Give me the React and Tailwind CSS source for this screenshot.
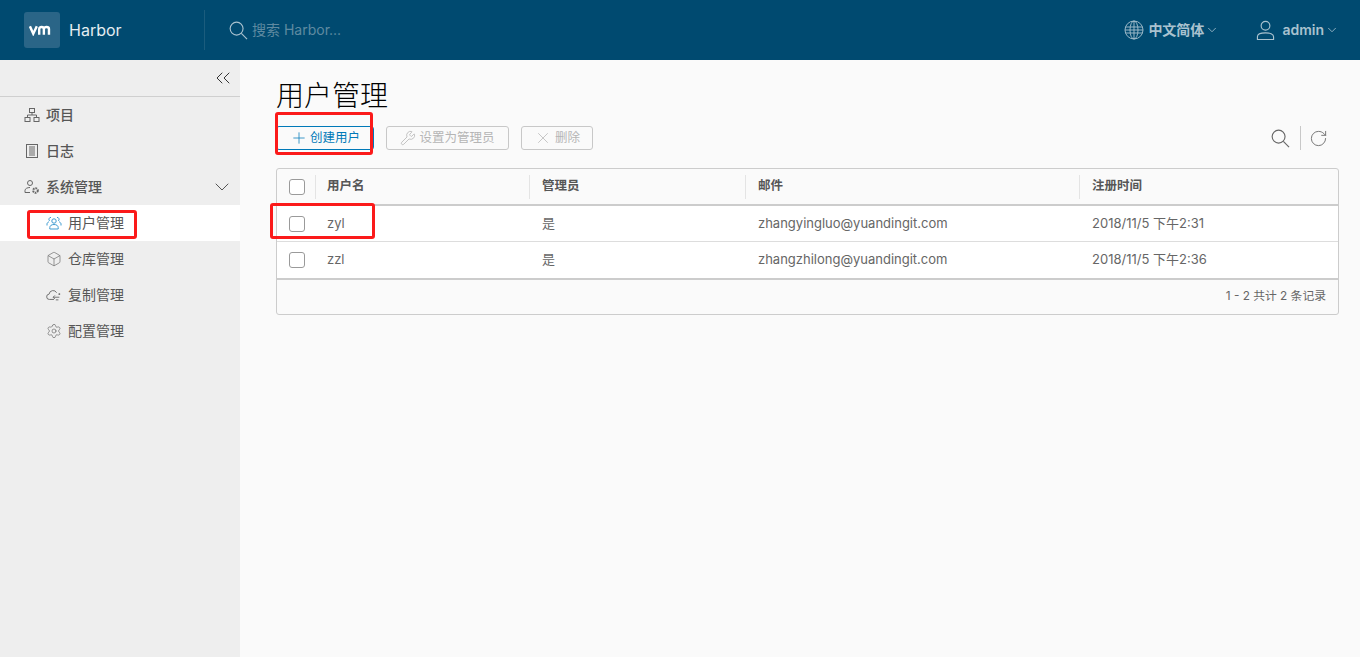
import { ChevronDown, ChevronsLeft, Plus, RotateCw, X, Wrench, Box, Settings } from 'lucide-react';

const font = { fontFamily: '"Inter", "Noto Sans CJK SC", sans-serif' };

const SearchIcon = ({ className }) => (
  <svg viewBox="0 0 20 20" fill="none" stroke="currentColor" strokeWidth="1.2" className={className}>
    <circle cx="8" cy="8" r="6.8" />
    <path d="M13 13l6 6" />
  </svg>
);

const GlobeIcon = ({ className }) => (
  <svg viewBox="0 0 20 20" fill="none" stroke="currentColor" strokeWidth="0.9" className={className}>
    <circle cx="10" cy="10" r="9" />
    <ellipse cx="10" cy="10" rx="4" ry="9" />
    <path d="M10 1v18M1.5 7h17M1.5 13h17M1 10h18" />
  </svg>
);

const UserIcon = ({ className }) => (
  <svg viewBox="0 0 20 22" fill="none" stroke="currentColor" strokeWidth="1.2" className={className}>
    <circle cx="10" cy="6" r="4.6" />
    <path d="M1.5 20.5v-3c0-2.6 4-4 8.5-4s8.5 1.4 8.5 4v3z" />
  </svg>
);

const ProjectIcon = ({ className }) => (
  <svg viewBox="0 0 16 16" fill="none" stroke="currentColor" strokeWidth="1" className={className}>
    <rect x="5.5" y="1.5" width="5" height="4" />
    <rect x="1" y="10.5" width="5" height="4" />
    <rect x="10" y="10.5" width="5" height="4" />
    <path d="M8 5.5V8M3.5 10.5V8h9v2.5" />
  </svg>
);

const LogIcon = ({ className }) => (
  <svg viewBox="0 0 16 16" fill="none" stroke="currentColor" strokeWidth="1" className={className}>
    <rect x="2.5" y="1.5" width="11" height="13" />
    <path d="M5 4h6M5 6h6M5 8h6M5 10h6M5 12h6" />
  </svg>
);

const AdminIcon = ({ className }) => (
  <svg viewBox="0 0 16 16" fill="none" stroke="currentColor" className={className}>
    <circle cx="6" cy="4" r="2.5" />
    <path d="M1 13.5v-2c0-2 2.5-3 5-3" />
    <path d="M1 13.5h5" />
    <circle cx="11.5" cy="11.5" r="2.3" strokeWidth="2" strokeDasharray="1.6 0.8" />
  </svg>
);

const UsersIcon = ({ className }) => (
  <svg viewBox="0 0 16 16" fill="none" stroke="currentColor" strokeWidth="1" className={className}>
    <circle cx="8" cy="6" r="2.2" />
    <path d="M3.8 14v-1.5c0-2 2-3 4.2-3s4.2 1 4.2 3V14z" />
    <path d="M5 2.4a2 2 0 0 0-1.4 3.5M1 10.5V9c0-1 .8-1.8 2-2.2M11 2.4a2 2 0 0 1 1.4 3.5M15 10.5V9c0-1-.8-1.8-2-2.2" />
  </svg>
);

const CloudIcon = ({ className }) => (
  <svg viewBox="0 0 18 16" fill="none" stroke="currentColor" strokeWidth="1" className={className}>
    <path d="M9 13H4a3 3 0 0 1-.5-6A4.5 4.5 0 0 1 12 5.5" />
    <path d="M15 8v-2M14 7h2M8 10.5h7M8 10.5l2-2M8 10.5l2 2M14 13.5h-3" />
  </svg>
);

const VmLogo = () => (
  <svg viewBox="0 0 28 12" className="w-[26px] h-[12px]" fill="none" stroke="white" strokeWidth="2.6">
    <path d="M1 2l3.6 8L8.4 2" />
    <path d="M11 11V5c0-3 5-3 5 0v6M16 5c0-3 5.5-3 5.5 0v6" />
  </svg>
);

const navTop = [
  { label: '项目', Icon: ProjectIcon },
  { label: '日志', Icon: LogIcon },
];

const navSub = [
  { label: '用户管理', Icon: UsersIcon, active: true },
  { label: '仓库管理', Icon: Box },
  { label: '复制管理', Icon: CloudIcon },
  { label: '配置管理', Icon: Settings },
];

const users = [
  { name: 'zyl', admin: '是', mail: 'zhangyingluo@yuandingit.com', time: '2018/11/5 下午2:31' },
  { name: 'zzl', admin: '是', mail: 'zhangzhilong@yuandingit.com', time: '2018/11/5 下午2:36' },
];

const cols = 'grid grid-cols-[38px_214px_216px_334px_1fr]';

const Check = () => <span className="block w-4 h-4 rounded-[3px] border border-[#9a9a9a] bg-white" />;

const RedBox = ({ className }) => (
  <div className={`absolute border-[3px] border-[#fb1a1a] rounded-[3px] pointer-events-none ${className}`} />
);

const App = () => {
  return (
    <div style={font} className="relative w-[1360px] h-[657px] overflow-hidden flex flex-col bg-[#fafafa] text-[#565656]">
      <header className="h-[60px] shrink-0 bg-[#004a70] flex items-center text-[#a9c2cf]">
        <div className="w-[205px] h-10 flex items-center border-r border-[#1b5c7d] pl-6">
          <div className="w-9 h-9 rounded-[3px] bg-[#2a6587] flex items-center justify-center">
            <VmLogo />
          </div>
          <span className="ml-[9px] text-base text-[#e4edf1]">Harbor</span>
        </div>
        <SearchIcon className="ml-[24px] w-[19px] h-[19px] text-[#a9c2cf]" />
        <span className="ml-[4px] text-sm text-[#5f8aa1]">搜索 Harbor...</span>
        <div className="ml-auto flex items-center">
          <GlobeIcon className="w-5 h-5" />
          <span className="ml-[4px] text-sm font-semibold">中文简体</span>
          <ChevronDown size={14} strokeWidth={1.4} className="ml-[1px]" />
          <UserIcon className="ml-[37px] w-[19px] h-[21px]" />
          <span className="ml-[7px] text-sm font-semibold">admin</span>
          <ChevronDown size={14} strokeWidth={1.4} className="ml-[1px] mr-[21px]" />
        </div>
      </header>

      <div className="flex flex-1 min-h-0">
        <aside className="w-[240px] shrink-0 bg-[#eeeeee] text-sm">
          <div className="h-[37px] border-b border-[#cfcfcf] flex justify-end items-center pr-[5px]">
            <ChevronsLeft size={24} strokeWidth={1} className="text-[#333]" />
          </div>
          {navTop.map(({ label, Icon }) => (
            <div key={label} className="h-9 flex items-center pl-6 font-medium text-[#565656]">
              <Icon className="w-4 h-4 mr-[6px] text-[#666]" />
              {label}
            </div>
          ))}
          <div className="h-9 flex items-center pl-6 pr-[6px] font-medium text-[#565656]">
            <AdminIcon className="w-4 h-4 mr-[6px] text-[#666]" />
            系统管理
            <ChevronDown size={24} strokeWidth={1} className="ml-auto text-[#555]" />
          </div>
          {navSub.map(({ label, Icon, active }) => (
            <div key={label} className={`h-9 flex items-center pl-[46px] ${active ? 'bg-white' : ''}`}>
              <Icon className={`w-4 h-4 mr-[6px] ${active ? 'text-[#3f9bd0]' : 'text-[#666]'}`} strokeWidth={1} />
              {label}
            </div>
          ))}
        </aside>

        <main className="flex-1 pl-9 pr-[21px]">
          <h1 className="mt-[18px] h-[36px] text-[28px] leading-[36px] font-light text-black">用户管理</h1>
          <div className="mt-3 h-6 flex items-center">
            <button className="h-6 w-[98px] flex items-center justify-center rounded-[3px] border border-[#0079b8] text-[#0079b8] text-[12.5px]">
              <Plus size={18} strokeWidth={1} className="mr-[2px]" />
              创建用户
            </button>
            <button className="ml-3 h-6 w-[123px] flex items-center justify-center rounded-[3px] border border-[#c8c8c8] text-[#b5b5b5] text-[12.5px]">
              <Wrench size={16} strokeWidth={1.2} className="mr-[3px]" />
              设置为管理员
            </button>
            <button className="ml-3 h-6 w-[72px] flex items-center justify-center rounded-[3px] border border-[#c8c8c8] text-[#b5b5b5] text-[12.5px]">
              <X size={18} strokeWidth={1} className="mr-[3px]" />
              删除
            </button>
            <div className="ml-auto flex items-center pr-[11px] text-[#666]">
              <SearchIcon className="w-[19px] h-[19px]" />
              <span className="ml-[10px] mr-2 h-6 w-px bg-[#c8c8c8]" />
              <RotateCw size={19} strokeWidth={1.1} />
            </div>
          </div>

          <div className="mt-[18px] h-[147px] rounded-[3px] border border-[#cccccc] text-[13px]">
            <div className={`${cols} h-[37px] items-center border-b-[2px] border-[#cccccc] font-semibold text-[12.5px]`}>
              <div className="pl-3"><Check /></div>
              {['用户名', '管理员', '邮件', '注册时间'].map((h, i) => (
                <div key={h} className={`h-6 flex items-center border-l border-[#e4e4e4] ${i === 0 ? 'pl-[11px]' : 'pl-3'}`}>{h}</div>
              ))}
            </div>
            {users.map((u, i) => (
              <div key={u.name} className={`${cols} h-9 items-center bg-white text-[#666] ${i === 0 ? 'border-b border-[#dddddd]' : ''}`}>
                <div className="pl-3"><Check /></div>
                <div className="pl-3">{u.name}</div>
                <div className="pl-[13px]">{u.admin}</div>
                <div className="pl-[13px]">{u.mail}</div>
                <div className="pl-[13px]">{u.time}</div>
              </div>
            ))}
            <div className="h-[35px] border-t-[2px] border-[#cccccc] flex items-center justify-end pr-3 text-[11.8px] text-[#666]">
              1 - 2 共计 2 条记录
            </div>
          </div>
        </main>
      </div>

      <RedBox className="left-[275px] top-[112px] w-[98px] h-[43px]" />
      <RedBox className="left-[270px] top-[203px] w-[105px] h-[36px]" />
      <RedBox className="left-[27px] top-[210px] w-[110px] h-[29px]" />
    </div>
  );
};

export default App;
